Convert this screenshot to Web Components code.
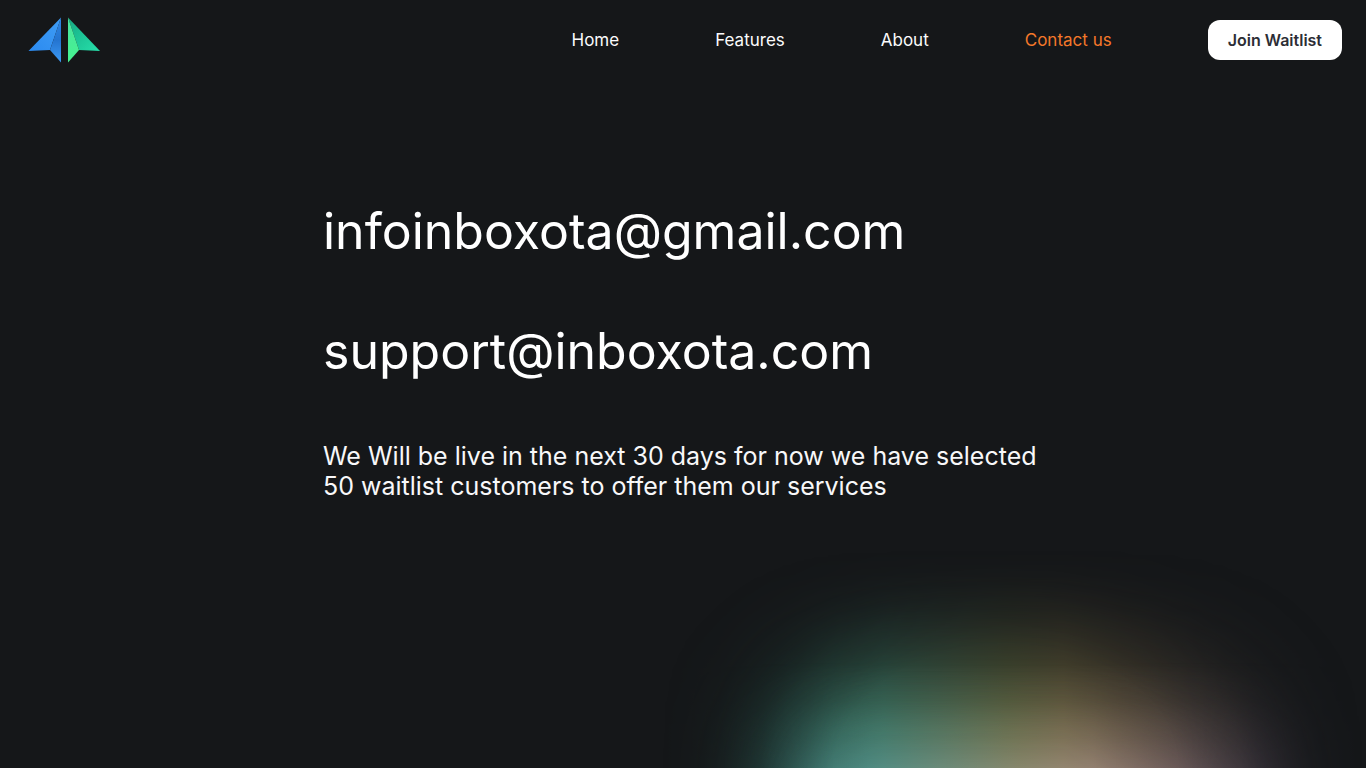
<!DOCTYPE html>
<html lang="en">
<head>
<meta charset="utf-8">
<meta name="viewport" content="width=device-width, initial-scale=1">
<title>Inboxota – Contact us</title>
<style>
  body { margin: 0; background: #151719; font-family: Inter, "Liberation Sans", sans-serif; }
</style>
</head>
<body>
<contact-page>
  <site-header slot="header">
    <nav-link href="#home">Home</nav-link>
    <nav-link href="#features">Features</nav-link>
    <nav-link href="#about">About</nav-link>
    <nav-link href="#contact" current>Contact us</nav-link>
    <waitlist-button slot="action">Join Waitlist</waitlist-button>
  </site-header>
  <mail-link address="infoinboxota@gmail.com"></mail-link>
  <mail-link address="support@inboxota.com"></mail-link>
  <launch-note>We Will be live in the next 30 days for now we have selected 50 waitlist customers to offer them our services</launch-note>
</contact-page>
<script>
const define = (name, render) => customElements.define(name, class extends HTMLElement {
  constructor() {
    super();
    this.attachShadow({ mode: "open" }).innerHTML = render(this);
  }
});

define("brand-logo", () => `
  <style>
    :host { display: block; }
    a { display: block; }
    svg { display: block; width: 72px; height: 46px; }
  </style>
  <a href="#home" aria-label="Inboxota home">
    <svg viewBox="0 0 72 46" aria-hidden="true">
      <defs>
        <linearGradient id="b1" x1="0" y1="1" x2="1" y2="0"><stop stop-color="#2b8af0"/><stop offset="1" stop-color="#3f9df5"/></linearGradient>
        <linearGradient id="b2" x1="0" y1="1" x2="0" y2="0"><stop stop-color="#3c9af5"/><stop offset=".5" stop-color="#2474d0"/><stop offset="1" stop-color="#2f86e4"/></linearGradient>
        <linearGradient id="g1" x1="1" y1="1" x2="0" y2="0"><stop stop-color="#27e0ab"/><stop offset=".6" stop-color="#1bc093"/><stop offset="1" stop-color="#18a880"/></linearGradient>
        <linearGradient id="g2" x1="0" y1="1" x2="0" y2="0"><stop stop-color="#45f38f"/><stop offset="1" stop-color="#4be3a0"/></linearGradient>
      </defs>
      <path d="M33 0.5 0.5 34 22 33Z" fill="url(#b1)"/>
      <path d="M33 0.5 22 33 33 45.5Z" fill="url(#b2)"/>
      <path d="M40 0.5 72 34 51 33Z" fill="url(#g1)"/>
      <path d="M40 0.5 51 33 40 45.5Z" fill="url(#g2)"/>
    </svg>
  </a>`);

define("nav-link", host => `
  <style>
    :host { display: block; }
    a { color: #fbfbfc; font-size: 17px; line-height: 24px; text-decoration: none; white-space: nowrap; }
    :host([current]) a { color: #f4782a; }
  </style>
  <a href="${host.getAttribute("href")}"${host.hasAttribute("current") ? ' aria-current="page"' : ""}><slot></slot></a>`);

define("waitlist-button", () => `
  <style>
    :host { display: block; }
    button { display: block; padding: 8px 20px; border: 0; border-radius: 12px; background: #fff; color: #2c2d35;
      font: 600 16px/24px Inter, "Liberation Sans", sans-serif; white-space: nowrap; cursor: pointer; }
  </style>
  <button type="button"><slot></slot></button>`);

define("site-header", () => `
  <style>
    :host { display: block; }
    header { display: flex; align-items: center; justify-content: space-between; padding: 16px 24px 16px 28px; min-height: 48px; }
    .right, nav { display: flex; align-items: center; gap: 96px; }
  </style>
  <header>
    <brand-logo></brand-logo>
    <div class="right">
      <nav aria-label="Main"><slot></slot></nav>
      <slot name="action"></slot>
    </div>
  </header>`);

define("mail-link", host => `
  <style>
    :host { display: block; }
    a { color: #fff; font-size: 50px; line-height: 60px; text-decoration: none; overflow-wrap: anywhere; }
  </style>
  <a href="mailto:${host.getAttribute("address")}">${host.getAttribute("address")}</a>`);

define("launch-note", () => `
  <style>
    :host { display: block; }
    p { margin: 0; color: #f8f8f9; font-size: 25px; line-height: 30px; }
  </style>
  <p><slot></slot></p>`);

define("aurora-glow", () => `
  <style>
    :host { display: block; position: absolute; right: 0; bottom: 0; width: 720px; height: 220px; pointer-events: none;
      mask: radial-gradient(380px 270px at 50% 100%, #000 45%, rgb(0 0 0 / .8) 62%, rgb(0 0 0 / .35) 80%, transparent 100%); }
    div { position: absolute; inset: 0; }
    .hue {
      background: linear-gradient(90deg, transparent 2%, rgb(34 84 70 / .2) 10%, rgb(38 88 74 / .6) 18%, rgb(50 106 86 / .9) 26%, #3b745c 33%, #4c6f50 41%, #5f6a3f 50%, #6d643d 58%, rgb(104 90 60 / .8) 66%, rgb(88 76 62 / .62) 76%, rgb(70 62 60 / .4) 86%, rgb(50 46 56 / .15) 94%, transparent 100%);
      mask: linear-gradient(0deg, #000 0, rgb(0 0 0 / .86) 18%, rgb(0 0 0 / .6) 38%, rgb(0 0 0 / .38) 54%, rgb(0 0 0 / .18) 72%, rgb(0 0 0 / .05) 88%, transparent 100%);
    }
    .mist {
      background: linear-gradient(90deg, transparent 6%, rgb(70 120 128 / .25) 16%, rgb(86 150 154 / .7) 24%, #5f9c9c 31%, #7f9c94 41%, #a09a8a 52%, #b29a94 62%, rgb(156 128 138 / .75) 73%, rgb(110 92 120 / .5) 85%, rgb(90 80 110 / .15) 94%, transparent 100%);
      mask: linear-gradient(0deg, rgb(0 0 0 / .6) 0, rgb(0 0 0 / .34) 14%, rgb(0 0 0 / .12) 30%, transparent 48%);
    }
  </style>
  <div class="hue"></div>
  <div class="mist"></div>`);

define("contact-page", () => `
  <style>
    :host { display: block; position: relative; min-height: 100vh; overflow: hidden; }
    main { position: relative; box-sizing: border-box; max-width: 768px; margin: 0 auto; padding: 121px 24px 48px; }
    .stack { display: flex; flex-direction: column; gap: 60px; }
  </style>
  <aurora-glow></aurora-glow>
  <slot name="header"></slot>
  <main><div class="stack"><slot></slot></div></main>`);
</script>
</body>
</html>
